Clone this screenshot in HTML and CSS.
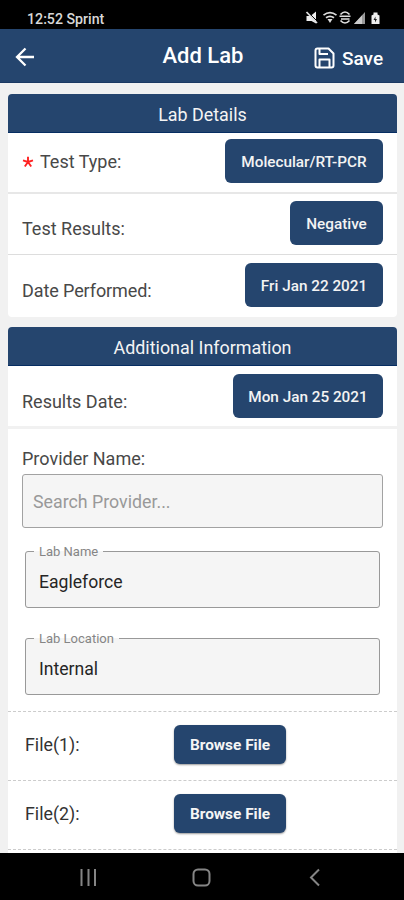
FILE: index.html
```html
<!DOCTYPE html>
<html lang="en">
<head>
<meta charset="utf-8">
<title>Add Lab</title>
<link rel="stylesheet" href="styles.css">
</head>
<body>
<div class="status">
  <span class="clock">12:52 Sprint</span>
  <svg class="status-icons" width="78" height="16" viewBox="0 0 78 16" fill="none" stroke="#ddd">
    <path d="M1.500 6h4l5.500-4.500v12L6.500 11h-5z" fill="#eee" stroke="none"/>
    <path d="M2.500 1.500l10 10" stroke="#000" stroke-width="1"/><path d="M1.500 2l10.500 11" stroke-width="1.800"/>
    <path d="M18.500 5.200q6.500-5 13 0M21 7.800q4-3 8 0" stroke-width="1.700"/><path d="M22.500 9h5L25 13z" fill="#ddd" stroke="none"/>
    <path d="M35.500 4.500q4.500-5 9 0M35.500 10.500q4.500 5 9 0" stroke-width="1.700"/><path d="M34.500 6.200h11M36 9h8.500" stroke-width="1.500"/>
    <path d="M60 2v12H49z" fill="#999" stroke="none"/><path d="M57 5.500V14H49z" fill="#ccc" stroke="none"/>
    <path d="M66.500 5.500l2-1V2.500h4v2l2 1V14h-8z" fill="#eee" stroke="none"/><path d="M70.500 6.500l-2 3.500h1.500v2.500l2-3.500h-1.500z" fill="#222" stroke="none"/>
  </svg>
</div>
<header class="appbar">
  <svg class="back" width="20" height="20" viewBox="0 0 20 20" fill="none" stroke="#fff" stroke-width="2.300"><path d="M19 10H2.500M10.500 1.500L2 10l8.500 8.500"/></svg>
  <h1 class="title">Add Lab</h1>
  <div class="save">
    <svg width="21" height="22" viewBox="0 0 21 22" fill="none" stroke="#fff" stroke-width="2" stroke-linejoin="round"><path d="M3.500 1.500h11l5 5v12q0 2-2 2h-14q-2 0-2-2v-15q0-2 2-2zM5.500 2v5h8.500M5.500 20v-7.500h10V20"/></svg>
    <span>Save</span>
  </div>
</header>
<main class="content">
  <section class="card details">
    <h2 class="card-head">Lab Details</h2>
    <div class="row type"><span class="label t-type"><svg class="star" width="12" height="12" viewBox="0 0 12 12" stroke="#f22" stroke-width="1.900"><path d="M6 6V.8M6 6L1 4.400M6 6l5-1.600M6 6l-3.200 4.500M6 6l3.200 4.500"/></svg>Test Type:</span><button class="btn w-type">Molecular/RT-PCR</button></div>
    <div class="row results"><span class="label">Test Results:</span><button class="btn w-neg">Negative</button></div>
    <div class="row performed"><span class="label narrow">Date Performed:</span><button class="btn w-fri">Fri Jan 22 2021</button></div>
  </section>
  <section class="card info">
    <h2 class="card-head">Additional Information</h2>
    <div class="row date"><span class="label">Results Date:</span><button class="btn w-mon">Mon Jan 25 2021</button></div>
    <div class="provider"><label class="label" for="provider">Provider Name:</label><input id="provider" class="search" placeholder="Search Provider..."></div>
    <fieldset class="field"><legend>Lab Name</legend><div class="value">Eagleforce</div></fieldset>
    <fieldset class="field location"><legend>Lab Location</legend><div class="value">Internal</div></fieldset>
    <div class="file"><span class="file-label">File(1):</span><button class="browse">Browse File</button></div>
    <div class="file"><span class="file-label">File(2):</span><button class="browse">Browse File</button></div>
    <div class="file"></div>
  </section>
</main>
<nav class="nav">
  <svg width="404" height="47" viewBox="0 0 404 47" fill="none" stroke="#858585" stroke-width="2"><path d="M81.500 16v17M88.500 16v17M95 16v17"/><rect x="193.500" y="16.500" width="16" height="16" rx="4.500"/><path d="M319 16.500l-8 8 8 8"/></svg>
</nav>
</body>
</html>
```

FILE: styles.css
```css
* { box-sizing: border-box; }
body { margin: 0; width: 404px; height: 900px; display: flex; flex-direction: column; overflow: hidden; background: #f1f1f1; font-family: Roboto, sans-serif; color: #444; }
h1, h2 { margin: 0; }
button { font-family: inherit; border: 0; padding: 0; }
.status { height: 29px; flex: none; background: #000; color: #d8d8d8; display: flex; justify-content: space-between; padding: 10px 21px 0 27px; }
.clock { font-size: 14.2px; line-height: 18px; font-weight: 500; }
.appbar { height: 54px; flex: none; background: #25456e; border-bottom: 1px solid #1b3963; color: #fff; display: grid; grid-template-columns: 102px 1fr 102px; align-items: center; }
.back { margin-left: 15px; margin-top: 2px; }
.title { text-align: center; font-size: 22px; font-weight: 500; line-height: 26px; margin-left: 2px; margin-top: 1px; }
.save { display: flex; align-items: center; gap: 7px; font-size: 19px; font-weight: 500; margin-left: 12px; margin-top: 5px; }
.content { flex: none; height: 770px; padding: 11px 7px 0 8px; display: flex; flex-direction: column; gap: 10px; overflow: hidden; }
.card { background: #fff; border-radius: 4px; flex: none; }
.card-head { height: 39px; background: #25456e; border-bottom: 1px solid #062d62; border-radius: 4px 4px 0 0; color: #f4f4f4; font-size: 17.9px; line-height: 41px; font-weight: 400; text-align: center; }
.row { display: flex; justify-content: space-between; align-items: flex-start; padding: 0 14px; }
.type { height: 61px; padding-top: 6px; border-bottom: 2px solid #e7e7e7; }
.results { height: 61px; padding-top: 7px; border-bottom: 1px solid #ddd; }
.performed { height: 62px; padding-top: 8px; }
.date { height: 63px; padding-top: 8px; border-bottom: 3px solid #f1f1f1; }
.label { font-size: 18px; line-height: 22px; color: #484848; }
.row .label { margin-top: 17px; }
.row .t-type { margin-top: 12px; }
.narrow { letter-spacing: -0.1px; }
.star { margin-right: 6px; }
.btn { height: 44px; padding-top: 1px; border-radius: 6px; background: #25456e; color: #f3f3f3; font-size: 15.3px; font-weight: 500; }
.w-type { width: 158px; }
.w-neg { width: 93px; }
.w-fri { width: 138px; }
.w-mon { width: 150px; }
.provider { padding: 19px 14px 0; display: flex; flex-direction: column; height: 99px; }
.search { margin-top: 4px; height: 54px; width: 361px; border: 1px solid #a2a2a2; border-radius: 3px; background: #f5f5f5; font: 17.8px Roboto, sans-serif; padding: 0 10px; }
.search::placeholder { color: #999; opacity: 1; }
.field { margin: 14px 17px 0; padding: 0; height: 66px; border: 1px solid #999; border-radius: 3px; background: #f5f5f5; }
.location { margin-top: 21px; }
.field legend { margin-left: 8px; padding: 2px 5px 0; font-size: 13px; line-height: 16px; color: #858585; }
.value { padding: 11px 0 0 13px; line-height: 22px; font-size: 17.6px; color: #252525; }
.file { height: 69px; border-top: 1px dashed #ccc; display: grid; grid-template-columns: 149px 112px; padding: 13px 17px 0; align-items: start; }
.location + .file { margin-top: 16px; }
.file-label { font-size: 17.8px; line-height: 22px; margin-top: 9px; color: #333; }
.browse { height: 39px; border-radius: 6px; background: #25456e; color: #f5f5f5; font-size: 15.4px; font-weight: 700; box-shadow: 0 1px 2px #0006; }
.nav { flex: 1; background: #000; }
```
